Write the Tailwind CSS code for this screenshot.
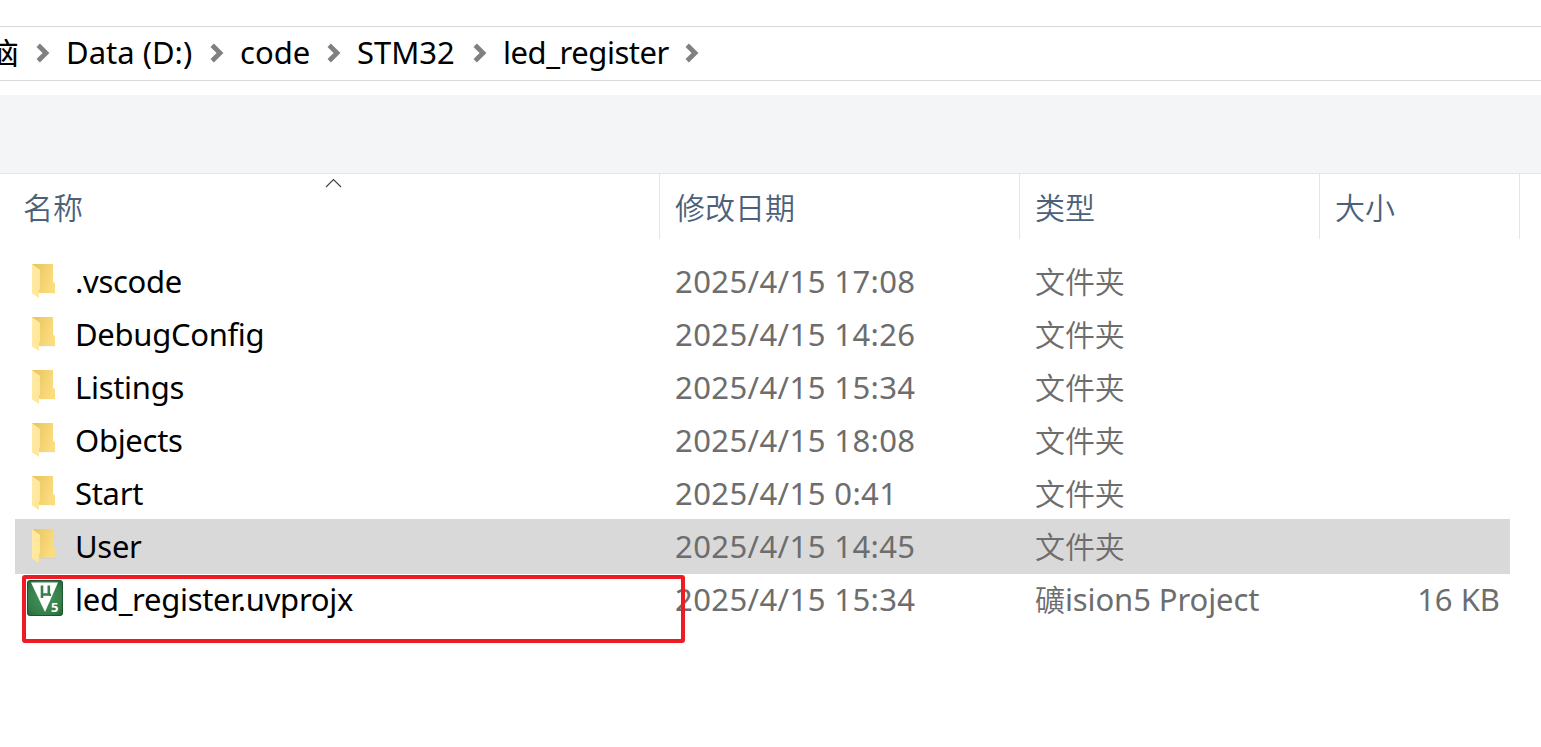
<!DOCTYPE html>
<html lang="zh-CN">
<head>
    <meta charset="UTF-8">
    <meta name="viewport" content="width=device-width, initial-scale=1.0">
    <title>led_register</title>
    <script src="https://cdn.jsdelivr.net/npm/@tailwindcss/browser@4"></script>
</head>
<body class="bg-white text-black font-['Noto_Sans','Noto_Sans_CJK_SC',sans-serif] overflow-hidden">

<!-- Shared icons -->
<svg class="absolute w-0 h-0">
    <defs>
        <linearGradient id="folderBack" x1="0" y1="0" x2="1" y2="0.4">
            <stop offset="0" stop-color="#e8c35c"/>
            <stop offset="1" stop-color="#fbdc7e"/>
        </linearGradient>
        <linearGradient id="folderFront" x1="0" y1="0" x2="1" y2="1">
            <stop offset="0" stop-color="#ffeaa6"/>
            <stop offset="1" stop-color="#ffe698"/>
        </linearGradient>
        <radialGradient id="keilGreen" r="0.75">
            <stop offset="0" stop-color="#43935a"/>
            <stop offset="0.6" stop-color="#35804a"/>
            <stop offset="1" stop-color="#215c35"/>
        </radialGradient>
    </defs>
    <symbol id="chevron" viewBox="0 0 14 20">
        <path d="M2.200 2.300 10 10l-7.800 7.700" fill="none" stroke="#808080" stroke-width="4.800"/>
    </symbol>
    <symbol id="folder" viewBox="0 0 26 36">
        <path d="M8 28.500h17l-1 1.200H8z" fill="#000" opacity=".04"/>
        <path d="M0 0h21v17.500l2 2V29H7L0 20z" fill="url(#folderBack)"/>
        <path d="M0 0l7.500 5.500q.5.500.5 1.500V25l-1 .5v8.500L0 29.500z" fill="url(#folderFront)"/>
    </symbol>
</svg>

<div class="flex flex-col h-screen w-[1541px]">
    <!-- Address bar -->
    <div class="mt-[26px] h-[55px] shrink-0 border-y border-[#d9d9d9] flex items-center text-[31px] leading-[53px] whitespace-nowrap">
        <span class="w-[19px] mr-[17px] shrink-0 text-[30px] -indent-[11px] -mt-0.5 origin-right scale-x-115">脑</span>
        <svg class="w-[14px] h-5 mr-4 shrink-0 -mt-0.5"><use href="#chevron"/></svg>
        <span class="w-[144px] -mt-0.5">Data (D:)</span>
        <svg class="w-[14px] h-5 mr-4 shrink-0 -mt-0.5"><use href="#chevron"/></svg>
        <span class="w-[87px] -mt-0.5">code</span>
        <svg class="w-[14px] h-5 mr-4 shrink-0 -mt-0.5"><use href="#chevron"/></svg>
        <span class="w-[116px] -mt-0.5">STM32</span>
        <svg class="w-[14px] h-5 mr-4 shrink-0 -mt-0.5"><use href="#chevron"/></svg>
        <span class="w-[182px] -mt-0.5 tracking-[-0.45px]">led_register</span>
        <svg class="w-[14px] h-5 shrink-0 -mt-0.5"><use href="#chevron"/></svg>
    </div>

    <!-- Command bar -->
    <div class="mt-[14px] h-[79px] shrink-0 bg-[#f4f5f7] border-b border-[#e5e5e7]"></div>

    <!-- Column headers -->
    <div class="flex h-[65px] shrink-0 text-[30px] leading-[67px] text-[#4c607a] font-[350]">
        <div class="relative w-[660px] pl-[23px] border-r border-[#e5e5e5]">
            名称
            <svg class="absolute left-[325px] top-[4px] w-[17px] h-[10px]" viewBox="0 0 17 10" fill="none" stroke="#444" stroke-width="1.200"><path d="M1 9l7.500-7.500L16 9"/></svg>
        </div>
        <div class="w-[360px] pl-[15px] border-r border-[#e5e5e5]">修改日期</div>
        <div class="w-[300px] pl-[15px] border-r border-[#e5e5e5]">类型</div>
        <div class="w-[200px] pl-[15px] border-r border-[#e5e5e5]">大小</div>
    </div>

    <!-- File list -->
    <div id="files" class="mt-[16px] ml-[15px] w-[1495px] text-[31px] leading-[53px] whitespace-nowrap relative">
        <!-- Highlight box round the project file -->
        <div class="absolute z-10 left-[7px] top-[320px] w-[663px] h-[68px] border-4 border-[#ed1c24] rounded-[3px]"></div>
    </div>
</div>

<script>
    const files = [
        [".vscode", "2025/4/15 17:08"],
        ["DebugConfig", "2025/4/15 14:26"],
        ["Listings", "2025/4/15 15:34"],
        ["Objects", "2025/4/15 18:08"],
        ["Start", "2025/4/15 0:41"],
        ["User", "2025/4/15 14:45"],
        ["led_register.uvprojx", "2025/4/15 15:34", "project"],
    ];

    const folderIcon = `<svg class="w-[26px] h-9 ml-[17px] mt-[9px]"><use href="#folder"/></svg>`;
    const projectIcon = `
        <svg class="w-9 h-9 ml-3 mt-[7px]" viewBox="0 0 36 36">
            <rect width="36" height="36" rx="3.500" fill="url(#keilGreen)"/>
            <rect x=".5" y=".5" width="35" height="35" rx="3" fill="none" stroke="#1d5431"/>
            <path d="M4 2.500h27L18 32z" fill="#fff"/>
            <path d="M15 5.500V18M15 14.500h7.500M21.800 5.500v8q0 1.500 2.200 1.200" fill="none" stroke="#35804a" stroke-width="2.600"/>
            <text x="24" y="31.500" fill="#fff" font-family="Open Sans" font-size="13" font-weight="700">5</text>
        </svg>`;

    document.getElementById("files").insertAdjacentHTML("beforeend", files.map(([name, date, kind]) => `
        <div class="flex h-[53px] ${name === "User" ? "bg-[#d9d9d9] shadow-[0_1px_0_#d9d9d9,0_-1px_0_#d9d9d9]" : ""}">
            <div class="w-[60px] shrink-0">${kind ? projectIcon : folderIcon}</div>
            <div class="w-[600px] shrink-0 tracking-[-0.3px]">${name}</div>
            <div class="w-[360px] shrink-0 text-[#6d6d6d] tracking-[0.4px]">${date}</div>
            <div class="w-[300px] shrink-0 text-[#6d6d6d] tracking-[-0.1px]">${kind
                ? `<span class="text-[30px] font-[350]">礦</span>ision5 Project`
                : `<span class="text-[30px] font-[350]">文件夹</span>`}</div>
            <div class="flex-1 pr-[10px] text-right text-[#6d6d6d]">${kind ? "16 KB" : ""}</div>
        </div>`).join(""));
</script>
</body>
</html>
